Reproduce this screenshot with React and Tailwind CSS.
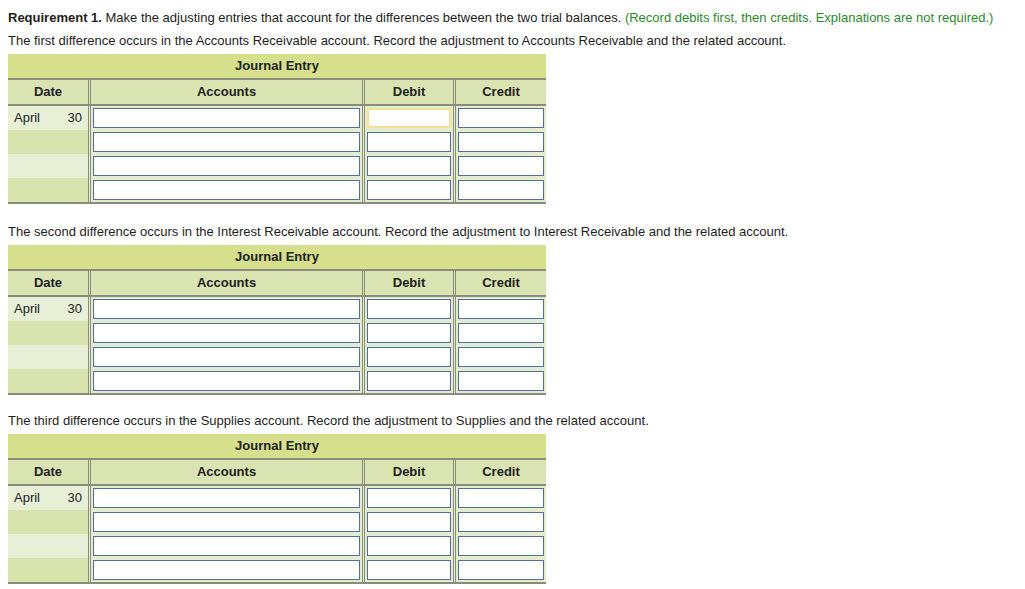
const sections = [
  {
    text: "The first difference occurs in the Accounts Receivable account. Record the adjustment to Accounts Receivable and the related account.",
    focusDebit: true,
    gap: "mt-[8px]",
  },
  {
    text: "The second difference occurs in the Interest Receivable account. Record the adjustment to Interest Receivable and the related account.",
    gap: "mt-[20px]",
  },
  {
    text: "The third difference occurs in the Supplies account. Record the adjustment to Supplies and the related account.",
    gap: "mt-[18px]",
  },
];

function Box({ focus }) {
  return (
    <div
      className={
        focus
          ? "h-[20px] mx-[2px] bg-white border-2 border-[#f3e094]"
          : "h-[20px] mx-[2px] bg-white border border-[#4f6fa0]"
      }
    />
  );
}

function JournalTable({ focusDebit }) {
  const rows = [0, 1, 2, 3];
  return (
    <div className="w-[538px] text-[13px]">
      <div className="h-[24px] bg-[#d5df8c] flex items-center justify-center font-bold text-[#222]">
        Journal Entry
      </div>
      <div className="h-[28px] flex bg-[#dae4b3] border-t-2 border-b-2 border-[#8b8d7b] font-bold text-[#222]">
        <div className="w-[80px] flex items-center justify-center">Date</div>
        <div className="w-[274px] border-l-[3px] border-double border-[#8b8d7b] flex items-center justify-center">
          Accounts
        </div>
        <div className="w-[91px] border-l-[3px] border-double border-[#8b8d7b] flex items-center justify-center">
          Debit
        </div>
        <div className="flex-1 border-l-[3px] border-double border-[#8b8d7b] flex items-center justify-center">
          Credit
        </div>
      </div>
      {rows.map((i) => (
        <div key={i} className="h-[24px] flex">
          <div
            className={
              i % 2 === 0
                ? "w-[80px] bg-[#e7efd7] flex items-center justify-between px-[6px] text-[#222]"
                : "w-[80px] bg-[#d8e3ad] flex items-center justify-between px-[6px] text-[#222]"
            }
          >
            {i === 0 && (
              <>
                <span>April</span>
                <span>30</span>
              </>
            )}
          </div>
          <div className="w-[274px] border-l-[3px] border-double border-[#8b8d7b] bg-[#e4ecd0] pt-[2px]">
            <Box />
          </div>
          <div className="w-[91px] border-l-[3px] border-double border-[#8b8d7b] bg-[#e4ecd0] pt-[2px]">
            <Box focus={focusDebit && i === 0} />
          </div>
          <div className="flex-1 border-l-[3px] border-double border-[#8b8d7b] bg-[#e4ecd0] pt-[2px]">
            <Box />
          </div>
        </div>
      ))}
      <div className="h-[2px] bg-[#8b8d7b]" />
    </div>
  );
}

export default function App() {
  return (
    <div
      className="bg-white min-h-[589px] pl-[8px] pt-[10px] text-[13px] text-[#1e1e1e]"
      style={{ fontFamily: '"Liberation Sans", Arial, sans-serif' }}
    >
      <p className="leading-[15px]">
        <span className="font-bold">Requirement 1.</span> Make the adjusting entries that account for the
        differences between the two trial balances.{" "}
        <span className="text-[#2b8a2b]">(Record debits first, then credits. Explanations are not required.)</span>
      </p>
      {sections.map((s, idx) => (
        <div key={idx} className={s.gap}>
          <p className="leading-[15px] mb-[6px]">{s.text}</p>
          <JournalTable focusDebit={s.focusDebit} />
        </div>
      ))}
    </div>
  );
}
